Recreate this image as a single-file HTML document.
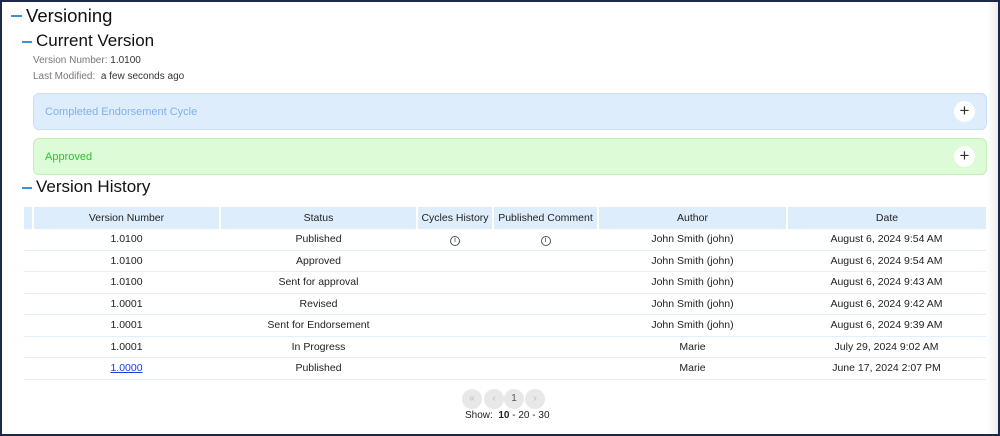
<!DOCTYPE html>
<html><head><style>
body{margin:0;width:1000px;height:436px;overflow:hidden;font-family:"Liberation Sans",sans-serif;background:#fff}
.frame{position:absolute;left:0;top:0;width:996px;height:432px;border:2px solid #1b2a4a;background:linear-gradient(to right,#fff 985px,#eee 996px)}
.a{position:absolute;white-space:nowrap}
.dash{position:absolute;height:2px;background:#3d8fe0}
.panel{position:absolute;left:33px;width:952px;height:35px;border-radius:6px;font-size:11px}
.plus{position:absolute;right:11px;top:7px;width:21px;height:21px;border-radius:50%;background:#fff;text-align:center;line-height:20px;font-size:17px;color:#333}
table{position:absolute;left:24px;top:207px;border-collapse:collapse;font-size:10.5px;color:#222}
th{background:#deedfc;font-weight:normal;height:22px;border-left:2px solid #fff;padding:0}
td{height:20.5px;text-align:center;border-bottom:1px solid #e3eefb;padding:0}
.i{display:inline-block;width:8px;height:8px;border:1px solid #555;border-radius:50%;font-size:7px;line-height:8px}
.pg{position:absolute;top:389px;width:20px;height:20px;border-radius:50%;background:#e8e8e8;color:#bbb;font-size:10px;text-align:center;line-height:20px}
</style></head><body>
<div class="frame"></div>
<div class="dash" style="left:11px;top:15px;width:11px"></div>
<div class="a" style="left:26px;top:5px;font-size:18.5px;color:#111">Versioning</div>
<div class="dash" style="left:22px;top:41px;width:10px"></div>
<div class="a" style="left:36px;top:31px;font-size:17px;color:#111">Current Version</div>
<div class="a" style="left:33px;top:55px;font-size:10px;color:#777">Version Number: <span style="color:#333">1.0100</span></div>
<div class="a" style="left:33px;top:71px;font-size:10px;color:#777">Last Modified:&nbsp; <span style="color:#333">a few seconds ago</span></div>
<div class="panel" style="top:93px;background:#deedfc;border:1px solid #c9dff5;color:#7fb0ee"><span class="a" style="left:11px;top:12px">Completed Endorsement Cycle</span><div class="plus">+</div></div>
<div class="panel" style="top:138px;background:#dcfbd6;border:1px solid #bff0b5;color:#2fc22f"><span class="a" style="left:11px;top:12px">Approved</span><div class="plus">+</div></div>
<div class="dash" style="left:22px;top:187px;width:10px"></div>
<div class="a" style="left:36px;top:177px;font-size:17px;color:#111">Version History</div>
<table>
<tr><th style="width:8px;border-left:0"></th><th style="width:185px">Version Number</th><th style="width:195px">Status</th><th style="width:74px">Cycles History</th><th style="width:103px">Published Comment</th><th style="width:187px">Author</th><th style="width:198px">Date</th></tr>
<tr><td></td><td>1.0100</td><td>Published</td><td><span class="i">i</span></td><td><span class="i">i</span></td><td>John Smith (john)</td><td>August 6, 2024 9:54 AM</td></tr>
<tr><td></td><td>1.0100</td><td>Approved</td><td></td><td></td><td>John Smith (john)</td><td>August 6, 2024 9:54 AM</td></tr>
<tr><td></td><td>1.0100</td><td>Sent for approval</td><td></td><td></td><td>John Smith (john)</td><td>August 6, 2024 9:43 AM</td></tr>
<tr><td></td><td>1.0001</td><td>Revised</td><td></td><td></td><td>John Smith (john)</td><td>August 6, 2024 9:42 AM</td></tr>
<tr><td></td><td>1.0001</td><td>Sent for Endorsement</td><td></td><td></td><td>John Smith (john)</td><td>August 6, 2024 9:39 AM</td></tr>
<tr><td></td><td>1.0001</td><td>In Progress</td><td></td><td></td><td>Marie</td><td>July 29, 2024 9:02 AM</td></tr>
<tr><td></td><td><a style="color:#1a3ee0;text-decoration:underline">1.0000</a></td><td>Published</td><td></td><td></td><td>Marie</td><td>June 17, 2024 2:07 PM</td></tr>
</table>
<div class="pg" style="left:462px">«</div><div class="pg" style="left:484px">‹</div><div class="pg" style="left:504px;color:#555">1</div><div class="pg" style="left:525px">›</div>
<div class="a" style="left:465px;top:410px;font-size:10px;color:#222">Show:&nbsp; <b>10</b> - 20 - 30</div>
</body></html>
